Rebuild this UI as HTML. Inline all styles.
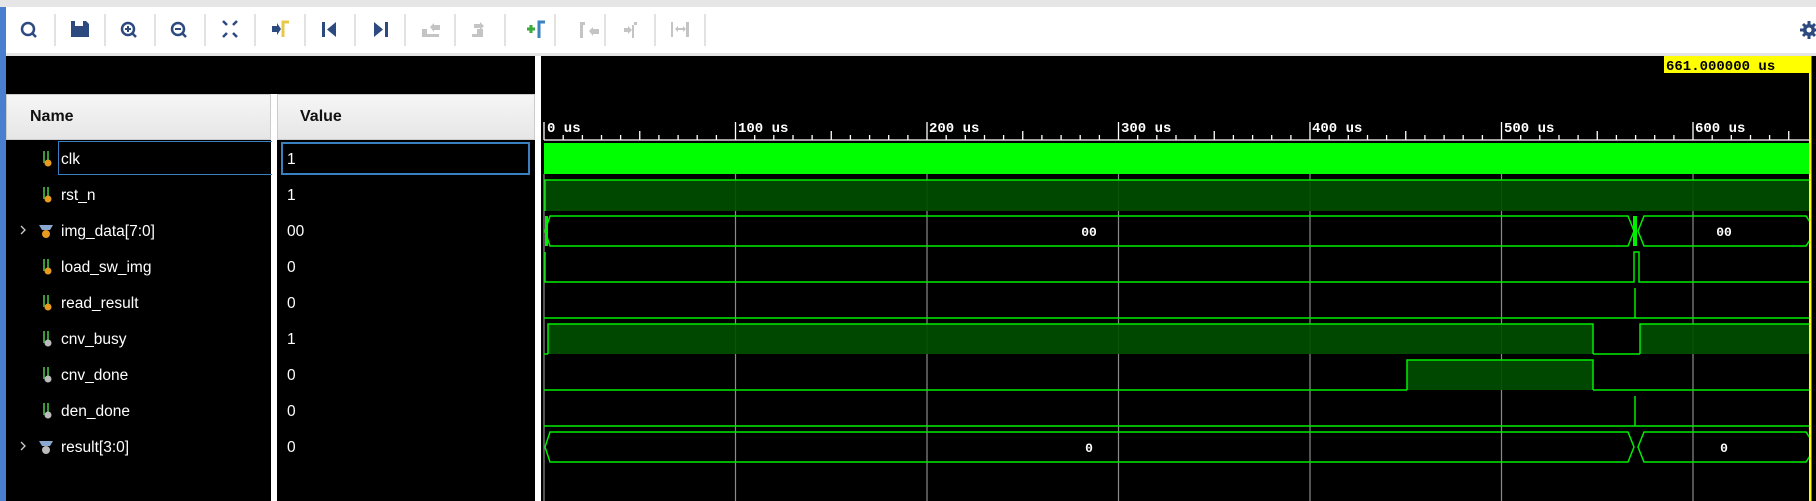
<!DOCTYPE html>
<html><head><meta charset="utf-8"><style>
*{margin:0;padding:0;box-sizing:border-box}
body{width:1816px;height:501px;overflow:hidden;background:#000;font-family:"Liberation Sans",Tahoma,sans-serif;position:relative}
.abs{position:absolute}
.nm{position:absolute;left:61px;color:#fff;font-size:15.5px;line-height:36px}
.vl{position:absolute;left:287px;color:#fff;font-size:15.5px;line-height:36px}
</style></head><body>
<div class="abs" style="left:0;top:0;width:1816px;height:7px;background:#e6e6e6"></div>
<div class="abs" style="left:0;top:7px;width:1816px;height:46px;background:#fff"></div>
<div class="abs" style="left:0;top:53px;width:1816px;height:3px;background:#e4e4e4"></div>
<div class="abs" style="left:0;top:7px;width:6px;height:494px;background:#4a7fd0"></div>
<svg class="abs" style="left:0;top:7px" width="1816" height="46">
<g stroke="#d8d8d8" stroke-width="1.5">
<line x1="55" y1="7" x2="55" y2="39"/><line x1="105" y1="7" x2="105" y2="39"/><line x1="155" y1="7" x2="155" y2="39"/><line x1="205" y1="7" x2="205" y2="39"/><line x1="255" y1="7" x2="255" y2="39"/><line x1="305" y1="7" x2="305" y2="39"/><line x1="355" y1="7" x2="355" y2="39"/><line x1="405" y1="7" x2="405" y2="39"/><line x1="455" y1="7" x2="455" y2="39"/><line x1="505" y1="7" x2="505" y2="39"/><line x1="555" y1="7" x2="555" y2="39"/><line x1="605" y1="7" x2="605" y2="39"/><line x1="655" y1="7" x2="655" y2="39"/><line x1="705" y1="7" x2="705" y2="39"/>
</g>
<g fill="none" stroke="#2d4a80" stroke-width="2.5">
<circle cx="28" cy="22" r="6"/><line x1="32" y1="26" x2="36" y2="30"/>
<circle cx="128" cy="22" r="6"/><line x1="132" y1="26" x2="136" y2="30"/><line x1="125" y1="22" x2="131" y2="22" stroke-width="2"/><line x1="128" y1="19" x2="128" y2="25" stroke-width="2"/>
<circle cx="178" cy="22" r="6"/><line x1="182" y1="26" x2="186" y2="30"/><line x1="175" y1="22" x2="181" y2="22" stroke-width="2"/>
</g>
<path d="M71 14h15l3 3v13h-18z" fill="#2d4a80"/><rect x="75" y="14" width="8" height="5" fill="#fff"/>
<g stroke="#2d4a80" stroke-width="2.5" fill="none"><path d="M223 14l4 4M237 14l-4 4M223 30l4-4M237 30l-4-4"/></g>
<path d="M272 19h5v-3l4 6-4 6v-3h-5z" fill="#2d4a80"/><path d="M283 30v-15h6" stroke="#e8c84a" stroke-width="3" fill="none"/>
<rect x="322" y="15" width="3" height="15" fill="#2d4a80"/><path d="M336 15v15l-9-7.5z" fill="#2d4a80"/>
<rect x="385" y="15" width="3" height="15" fill="#2d4a80"/><path d="M374 15v15l9-7.5z" fill="#2d4a80"/>
<g fill="#c4c4c4"><path d="M422 30v-8h5v5h12v3zM430 20l4-4v2h6v5h-6v2z"/><path d="M472 30v-3h5v-5h6v8zM474 17h6v-2l4 4-4 4v-2h-6z"/>
<path d="M580 31v-16h5v3h-2v13zM589 24l4-4v2h6v5h-6v2z"/><path d="M632 31v-13h5v-3h-3v16zM624 21h4v-2l4 4-4 4v-2h-4z"/>
<path d="M671 15h2v15h-2zM686 15h3v15h-3zM675 22l3-3v2h5v-2l3 3-3 3v-2h-5v2z"/></g>
<path d="M527 22h8M531 18v8" stroke="#3aaa3a" stroke-width="3"/><path d="M539 31v-16h6" stroke="#3a82c0" stroke-width="3" fill="none"/>
<g transform="translate(1809,23)" fill="#2d4a80"><circle r="6"/><g stroke="#2d4a80" stroke-width="3"><line x1="-9" y1="0" x2="9" y2="0"/><line x1="0" y1="-9" x2="0" y2="9"/><line x1="-6" y1="-6" x2="6" y2="6"/><line x1="-6" y1="6" x2="6" y2="-6"/></g><circle r="2.5" fill="#fff"/></g>
</svg>
<div class="abs" style="left:535px;top:56px;width:6px;height:445px;background:#fff"></div>
<div class="abs" style="left:6px;top:94px;width:265px;height:46px;background:linear-gradient(#f6f6f6,#e6e6e6);border:1px solid #ccc"></div>
<div class="abs" style="left:271px;top:94px;width:6px;height:407px;background:#fff"></div>
<div class="abs" style="left:277px;top:94px;width:258px;height:46px;background:linear-gradient(#f6f6f6,#e6e6e6);border:1px solid #ccc"></div>
<div class="abs" style="left:30px;top:94px;line-height:46px;font-weight:bold;font-size:16px;color:#111">Name</div>
<div class="abs" style="left:300px;top:94px;line-height:46px;font-weight:bold;font-size:16px;color:#111">Value</div>
<div class="abs" style="left:58px;top:141px;width:214px;height:34px;border:1px solid #3a7fc0;border-right:none"></div>
<div class="abs" style="left:281px;top:142px;width:249px;height:33px;border:2px solid #3a7fc0"></div>
<svg class="abs" style="left:0;top:142px" width="80" height="330">
<defs>
<g id="ic"><rect x="0" y="-9" width="2" height="12" fill="#3a9a3a"/><rect x="4" y="-9" width="2" height="12" fill="#3a9a3a"/><circle cx="5" cy="3" r="3.5" fill="#e89a20"/></g>
<g id="ig"><rect x="0" y="-9" width="2" height="12" fill="#3a9a3a"/><rect x="4" y="-9" width="2" height="12" fill="#3a9a3a"/><circle cx="5" cy="3" r="3.5" fill="#bbb"/></g>
<g id="bo"><path d="M-2-7h14l-3 5h-8z" fill="#8aa8d0"/><circle cx="5" cy="2" r="4" fill="#e89a20"/></g>
<g id="bg"><path d="M-2-7h14l-3 5h-8z" fill="#8aa8d0"/><circle cx="5" cy="2" r="4" fill="#bbb"/></g>
</defs>
<use href="#ic" x="43" y="18"/><use href="#ic" x="43" y="54"/><use href="#bo" x="41" y="90"/><use href="#ic" x="43" y="126"/><use href="#ic" x="43" y="162"/><use href="#ig" x="43" y="198"/><use href="#ig" x="43" y="234"/><use href="#ig" x="43" y="270"/><use href="#bg" x="41" y="306"/>
<path d="M21 84l4 4-4 4M21 300l4 4-4 4" stroke="#ccc" stroke-width="1.3" fill="none"/>
</svg>
<div class="nm" style="top:142px">clk</div><div class="vl" style="top:142px">1</div>
<div class="nm" style="top:178px">rst_n</div><div class="vl" style="top:178px">1</div>
<div class="nm" style="top:214px">img_data[7:0]</div><div class="vl" style="top:214px">00</div>
<div class="nm" style="top:250px">load_sw_img</div><div class="vl" style="top:250px">0</div>
<div class="nm" style="top:286px">read_result</div><div class="vl" style="top:286px">0</div>
<div class="nm" style="top:322px">cnv_busy</div><div class="vl" style="top:322px">1</div>
<div class="nm" style="top:358px">cnv_done</div><div class="vl" style="top:358px">0</div>
<div class="nm" style="top:394px">den_done</div><div class="vl" style="top:394px">0</div>
<div class="nm" style="top:430px">result[3:0]</div><div class="vl" style="top:430px">0</div>
<svg class="abs" style="left:0;top:0" width="1816" height="501">
<g stroke="#fff" stroke-width="1.3">
<line x1="544" y1="140" x2="1810" y2="140"/>
<path d="M544 122V140M735.5 122V140M927 122V140M1118.5 122V140M1310 122V140M1501.5 122V140M1693 122V140"/>
<path d="M639.75 131V140M831.25 131V140M1022.75 131V140M1214.25 131V140M1405.75 131V140M1597.25 131V140M1788.75 131V140"/>
<path d="M563.2 135V140M582.4 135V140M601.5 135V140M620.6 135V140M658.9 135V140M678.1 135V140M697.2 135V140M716.4 135V140M754.7 135V140M773.8 135V140M793 135V140M812.1 135V140M850.4 135V140M869.6 135V140M888.7 135V140M907.9 135V140M946.2 135V140M965.3 135V140M984.5 135V140M1003.6 135V140M1041.9 135V140M1061.1 135V140M1080.2 135V140M1099.4 135V140M1137.7 135V140M1156.8 135V140M1176 135V140M1195.1 135V140M1233.4 135V140M1252.6 135V140M1271.7 135V140M1290.9 135V140M1329.2 135V140M1348.3 135V140M1367.5 135V140M1386.6 135V140M1424.9 135V140M1444.1 135V140M1463.2 135V140M1482.4 135V140M1520.7 135V140M1539.8 135V140M1559 135V140M1578.1 135V140M1616.4 135V140M1635.6 135V140M1654.7 135V140M1673.9 135V140M1712.2 135V140M1731.3 135V140M1750.5 135V140M1769.6 135V140"/>
</g>
<g fill="#fff" font-family="'Liberation Mono',monospace" font-weight="bold" font-size="14">
<text x="547" y="132">0 us</text><text x="738" y="132">100 us</text><text x="929" y="132">200 us</text><text x="1121" y="132">300 us</text><text x="1312" y="132">400 us</text><text x="1504" y="132">500 us</text><text x="1695" y="132">600 us</text>
</g>
<rect x="1664" y="56" width="146" height="17" fill="#ffff00"/>
<text x="1666" y="70" font-family="'Liberation Mono',monospace" font-size="14" font-weight="bold" fill="#000">661.000000 us</text>
<g stroke="#8a8a8a" stroke-width="1.2">
<path d="M544 174V501M735.5 174V501M927 174V501M1118.5 174V501M1310 174V501M1501.5 174V501M1693 174V501"/>
</g>
<rect x="544" y="143" width="1266" height="31" fill="#00ff00"/>
<g fill="#004d00" fill-opacity="0.92" stroke="#00ee00" stroke-width="1.5">
<path d="M545 211V180H1810V211"/>
<path d="M548 354V324H1593V354"/>
<path d="M1640 354V324H1810V354"/>
<path d="M1407 390V360H1593V390"/>
</g>
<g fill="none" stroke="#00ee00" stroke-width="1.5">
<path d="M544 354H548M1593 354H1640"/>
<path d="M544 390H1407M1593 390H1810"/>
<path d="M545 231L550 216H1628L1634 231L1628 246H550Z"/>
<path d="M1810 222L1806 216H1644L1638 231L1644 246H1806L1810 240"/>
<path d="M545 252V282H1634V252H1639V282H1810"/>
<path d="M544 318H1810M1635 288V318"/>
<path d="M544 426H1810M1635 396V426"/>
<path d="M545 447L550 432H1628L1634 447L1628 462H550Z"/>
<path d="M1810 438L1806 432H1644L1638 447L1644 462H1806L1810 456"/>
</g>
<rect x="1633" y="216" width="4" height="30" fill="#00ee00"/>
<rect x="545" y="216" width="3" height="30" fill="#00ee00"/>
<g fill="#fff" font-family="'Liberation Mono',monospace" font-weight="bold" font-size="13" text-anchor="middle">
<text x="1089" y="236">00</text><text x="1724" y="236">00</text>
<text x="1089" y="452">0</text><text x="1724" y="452">0</text>
</g>
<rect x="1809" y="56" width="2.5" height="445" fill="#ffff00"/>
</svg>
</body></html>
